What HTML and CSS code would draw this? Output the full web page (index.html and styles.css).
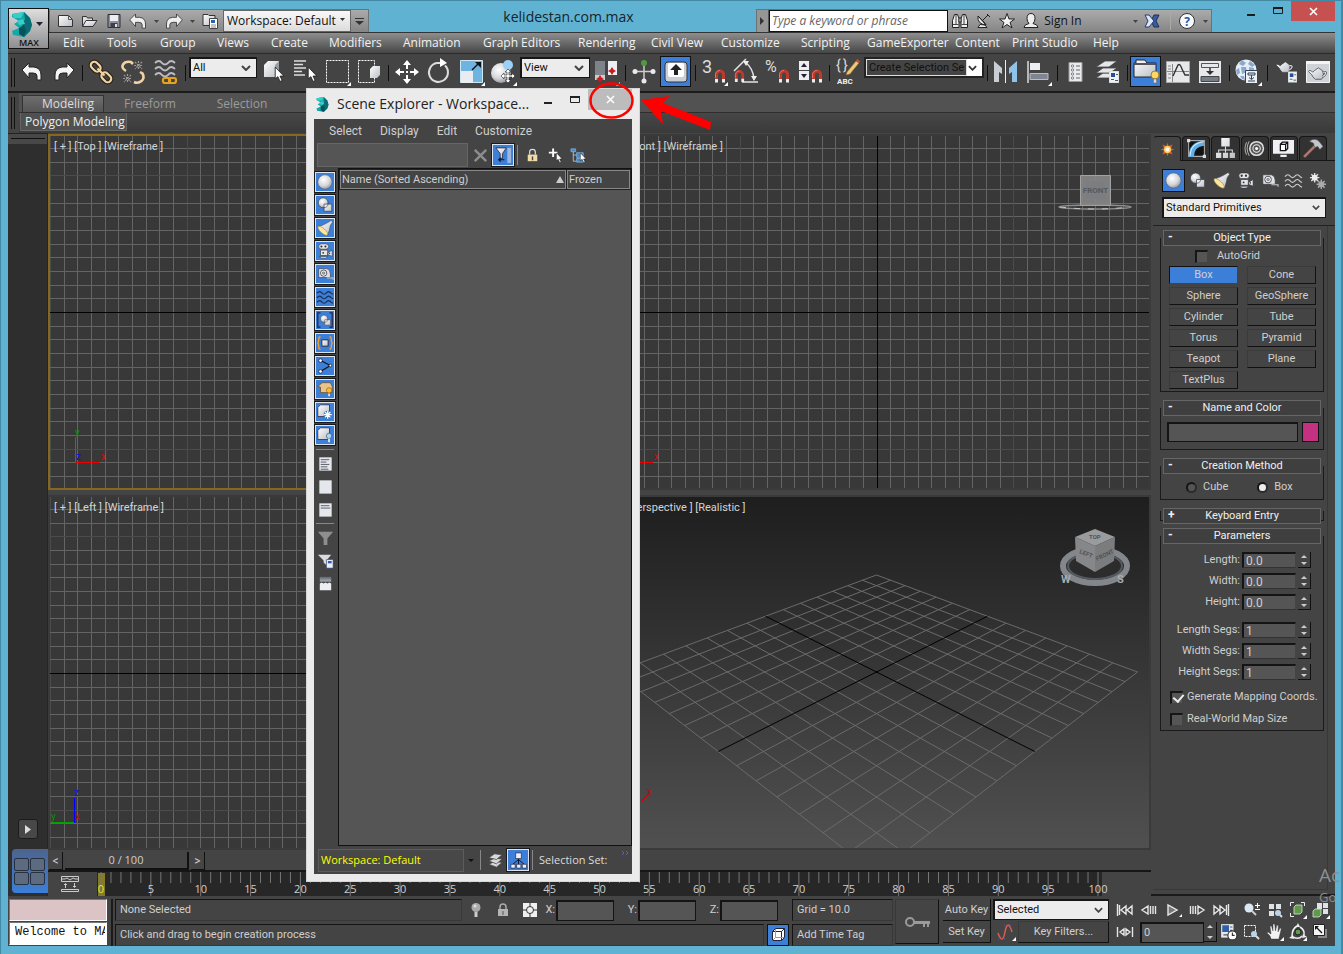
FILE: index.html
```html
<!DOCTYPE html>
<html lang="en">
<head>
<meta charset="utf-8">
<title>kelidestan.com.max</title>
<link rel="stylesheet" href="styles.css">
</head>
<body>
<svg class="defs" aria-hidden="true">
  <defs>
    <linearGradient id="gw" x1="0" y1="0" x2="1" y2="1"><stop offset="0" stop-color="#fff"/><stop offset="1" stop-color="#b9bdc4"/></linearGradient>
    <radialGradient id="gs" cx=".4" cy=".35" r=".7"><stop offset="0" stop-color="#fff"/><stop offset=".6" stop-color="#d4d6da"/><stop offset="1" stop-color="#8d9096"/></radialGradient>
    <linearGradient id="gd" x1="0" y1="0" x2="0" y2="1"><stop offset="0" stop-color="#60656d"/><stop offset="1" stop-color="#a9aeb6"/></linearGradient>
  </defs>
  <symbol id="logo" viewBox="0 0 20 25"><path fill="#15a8a8" d="M0 2 12 0l6 6 2 7-2 6-6 6-11-2-1-4 7-3-5-4 5-3-7-4z"/><path fill="#0b6b74" d="M12 0l6 6 2 7-2 6-6 6 1-6-3-6 3-6z"/><path fill="#36cfc8" d="M0 2 12 0 9 6 2 6zM5 9l6-2 2 5-6 1z"/><path fill="#08525c" d="M7 16l5-3 2 6-2 6-5-3z"/></symbol>
  <symbol id="undo" viewBox="0 0 20 18"><path d="M0 7 7 0v4h5q7 1 7 8v5h-4v-4q0-3-4-3H7v5z"/></symbol>
  <symbol id="redo" viewBox="0 0 20 18"><path d="M20 7 13 0v4H8q-7 1-7 8v5h4v-4q0-3 4-3h4v5z"/></symbol>
  <symbol id="sphere" viewBox="0 0 20 20"><circle cx="10" cy="10" r="8" fill="url(#gs)" stroke="#555a66" stroke-width=".6"/></symbol>
  <symbol id="shapes" viewBox="0 0 20 20"><circle cx="8" cy="7.500" r="5.500" fill="url(#gs)" stroke="#3a3f4a" stroke-width=".8"/><path fill="url(#gw)" stroke="#3a3f4a" stroke-width=".8" d="M9 9h8.500v8H9z"/><path fill="none" stroke="#555a66" stroke-width=".8" d="M13.500 8q0 5-5 5"/></symbol>
  <symbol id="light" viewBox="0 0 20 20"><path fill="url(#gw)" stroke="#3a3f4a" stroke-width=".6" d="M13 4l4-2.500 1.500 2L16 7q-1 6-3 11L2.500 8.500Q8 7 13 4z"/><ellipse cx="7.500" cy="13" rx="7" ry="2.600" transform="rotate(42 7.500 13)" fill="#ffe79a" stroke="#8a7a48" stroke-width=".6"/></symbol>
  <symbol id="camera" viewBox="0 0 20 20"><g fill="#e4e6ea" stroke="#33363d" stroke-width=".7"><rect x="3" y="2" width="11" height="6" rx="3"/><path d="M5 9h8v6H5zM13 12l5-3v7l-5-2zM4 16h9l-2 2H6z"/></g><g fill="#333"><circle cx="6" cy="5" r="1.200"/><circle cx="10.500" cy="5" r="1.200"/><circle cx="8" cy="12" r="1"/><circle cx="15" cy="12.500" r=".8"/></g></symbol>
  <symbol id="tape" viewBox="0 0 20 20"><path fill="#dfe1e6" stroke="#33363d" stroke-width=".7" d="M3 4h9q4 1 4 6v4H3z"/><circle cx="8.500" cy="9" r="3.500" fill="#fff" stroke="#444a55"/><circle cx="8.500" cy="9" r="1.500" fill="#aaa" stroke="#555" stroke-width=".6"/><path stroke="#c8c8c8" stroke-width="1.200" d="M12 14.500h7v2" fill="none"/></symbol>
  <symbol id="waves" viewBox="0 0 20 20"><path fill="none" stroke="currentColor" stroke-width="1.200" d="M1 6q3-4 6 0 2 2 4 0 3-4 6 0l2 1M1 11q3-4 6 0 2 2 4 0 3-4 6 0l2 1M1 16q3-4 6 0 2 2 4 0 3-4 6 0l2 1"/></symbol>
  <symbol id="cursor" viewBox="0 0 10 14"><path fill="#fff" stroke="#222" stroke-width=".8" d="M1 0v11l2.500-2L5.500 13.500l2-1-2-4H9z"/></symbol>
  <symbol id="magnet" viewBox="0 0 12 14"><path fill="none" stroke="#bd3a2c" stroke-width="3" d="M2.500 11V5.500a3.500 3.500 0 0 1 7 0V11"/><path fill="none" stroke="#f08070" stroke-width=".8" d="M1.500 9V5.500A4.200 4.200 0 0 1 6 1.500"/><path fill="#eee" d="M1 10h3v3.500H1zM8 10h3v3.500H8z"/></symbol>
  <symbol id="fly" viewBox="0 0 32 32"><path fill="#fff" d="M30 26v4h-4z"/></symbol>
  <symbol id="panelmini" viewBox="0 0 10 12"><path fill="#eef1f6" stroke="#9aa" stroke-width=".5" d="M0 0h10v12H0z"/><path fill="#244f96" d="M2 2h4v4H2z"/><path stroke="#555" d="M7 3.500h2M2 8.500h3M6 9.500h3"/></symbol>
  <symbol id="teapot" viewBox="0 0 22 16"><path fill="url(#gw)" stroke="#33363d" stroke-width=".8" d="M10 2q1-2 3 0l3 2q3 6-1 10H8Q5 12 4 9L0 5l1-1q3 0 4 2l2-2z"/><path fill="none" stroke="#33363d" stroke-width="2.600" d="M16 6q5-1 3.500 2-1 2-3.500 3"/><path fill="none" stroke="#dfe2e7" stroke-width="1.400" d="M16 6q5-1 3.500 2-1 2-3.500 3"/></symbol>
</svg>

<div class="window">
  <header class="header">
    <button class="appbtn" aria-label="Application menu"><svg width="20" height="25"><use href="#logo"/></svg><svg class="appdd" width="7" height="4" viewBox="0 0 7 4"><path fill="#223" d="M0 0h7L3.500 4z"/></svg><span>MAX</span></button>
    <div class="titlebar">
      <div class="qat">
        <button aria-label="New"><svg width="18" height="16" viewBox="0 0 18 16"><path fill="url(#gw)" stroke="#333" d="M1.500 2.500h10l4 4v7h-14z"/><path fill="none" stroke="#555" d="M11.500 2.500v4h4"/></svg></button>
        <button aria-label="Open"><svg width="18" height="16" viewBox="0 0 18 16"><path fill="#ddd" stroke="#333" d="M1.500 13.500v-10h4l1 1.500h5v3"/><path fill="url(#gw)" stroke="#333" d="M1.500 13.500 5 7.500h11l-4 6z"/></svg></button>
        <button aria-label="Save"><svg width="18" height="16" viewBox="0 0 18 16"><path fill="#8b9098" stroke="#2c2f38" d="M3 1.500h12v13H3z"/><path fill="#eceef2" d="M5 2h8v6H5z"/><path fill="#3c404a" d="M5.500 10h7v4.500h-7z"/><path fill="#ddd" d="M10 11h2v3h-2z"/></svg></button>
        <button aria-label="Undo"><svg class="tool-arrow" width="18" height="15"><use href="#undo"/></svg></button>
        <button class="narrow" aria-label="Undo list"><svg width="5" height="3" viewBox="0 0 5 3"><path fill="#444" d="M0 0h5L2.500 3z"/></svg></button>
        <button aria-label="Redo"><svg class="tool-arrow" width="18" height="15"><use href="#redo"/></svg></button>
        <button class="narrow" aria-label="Redo list"><svg width="5" height="3" viewBox="0 0 5 3"><path fill="#444" d="M0 0h5L2.500 3z"/></svg></button>
        <button aria-label="Project folder"><svg width="18" height="18" viewBox="0 0 18 18"><path fill="url(#gw)" stroke="#333" d="M2 13.500v-11h5l1 1h6v10z"/><path fill="#fff" stroke="#444" d="M8.500 6.500h8v10h-8z"/><path fill="#2863a8" d="M10 8h4v3h-4z"/><path stroke="#888" d="M10 13h5M10 15h5"/></svg></button>
        <span class="sel ws"><select aria-label="Workspace"><option>Workspace: Default</option></select><svg width="5" height="3" viewBox="0 0 5 3"><path fill="#333" d="M0 0h5L2.500 3z"/></svg></span>
        <button class="qmore" aria-label="Customize toolbar"><svg width="9" height="7" viewBox="0 0 9 7"><path fill="#333" d="M0 0h9v1H0zM0 3h9L4.500 7z"/></svg></button>
      </div>
      <h1>kelidestan.com.max</h1>
      <div class="info">
        <button class="infoarrow" aria-label="Collapse"><svg width="4" height="8" viewBox="0 0 4 8"><path fill="#333" d="M0 0l4 4-4 4z"/></svg></button>
        <input class="search" type="text" aria-label="Search" placeholder="Type a keyword or phrase">
        <button aria-label="Find"><svg width="18" height="18" viewBox="0 0 18 18"><g fill="#eee" stroke="#222"><path d="M3.500 2.500h3l1.500 4v9H1.500v-7zM14.500 2.500h-3l-1.500 4v9h6.500v-7z"/><path d="M8 6h2v4H8z"/></g><path stroke="#444" d="M2 12.500h5.500M10.500 12.500H16M5 3v9M13 3v9"/></svg></button>
        <button aria-label="Subscription"><svg width="18" height="18" viewBox="0 0 18 18"><path fill="#eee" stroke="#222" d="M3 4q-1 8 8 9l-2-3zM5 12.500l-2 3h9l-2-2.500zM3 4l8 9"/><path fill="none" stroke="#222" d="M8 8l5-5M12 2l3 3"/></svg></button>
        <button aria-label="Favorites"><svg width="18" height="18" viewBox="0 0 18 18"><path fill="#f2f2f2" stroke="#222" d="M9 1.500l2 5.500h5.500L12 10.500l2 5.500-5-3.500L4 16l2-5.500L1.500 7H7z"/></svg></button>
        <button class="signin"><svg width="18" height="18" viewBox="0 0 18 18"><path fill="#eee" stroke="#222" d="M9 1.500q4 0 4 5 0 3-2 5 5 1 5 4H2q0-3 5-4-2-2-2-5 0-5 4-5z"/></svg>Sign In<svg class="push" width="5" height="3" viewBox="0 0 5 3"><path fill="#444" d="M0 0h5L2.500 3z"/></svg></button>
        <button class="xchg" aria-label="Exchange"><svg width="18" height="16" viewBox="0 0 18 16"><path fill="#355da0" stroke="#1d3159" d="M16 2h-5L8 8l3 6h5l-3-6z"/><path fill="#dfe7f4" stroke="#223c72" d="M2 2h4l5 6-5 6H2l3-6z"/></svg></button>
        <i class="isep"></i>
        <button aria-label="Help"><svg width="18" height="18" viewBox="0 0 18 18"><circle cx="9" cy="9" r="7.500" fill="#f7f9fc" stroke="#333"/><text x="9" y="13.500" text-anchor="middle" font-size="12" font-weight="700" fill="#1e58a8">?</text></svg></button>
        <button class="narrow" aria-label="Help menu"><svg width="5" height="3" viewBox="0 0 5 3"><path fill="#444" d="M0 0h5L2.500 3z"/></svg></button>
      </div>
      <div class="winctl">
        <button aria-label="Minimize"><svg width="10" height="12" viewBox="0 0 10 12"><path fill="#1c1c1c" d="M1 9h8v2H1z"/></svg></button>
        <button aria-label="Maximize"><svg width="10" height="12" viewBox="0 0 10 12"><path fill="none" stroke="#1c1c1c" d="M.5 2.500h9v6h-9z"/><path fill="#1c1c1c" d="M0 2h10v2H0z"/></svg></button>
        <button class="close" aria-label="Close"><svg width="9" height="9" viewBox="0 0 9 9"><path stroke="#fff" stroke-width="1.600" d="M1 1l7 7M8 1 1 8"/></svg></button>
      </div>
    </div>
    <nav class="menubar" aria-label="Main menu">
      <button>Edit</button><button>Tools</button><button>Group</button><button>Views</button><button>Create</button><button>Modifiers</button><button>Animation</button><button>Graph Editors</button><button>Rendering</button><button>Civil View</button><button>Customize</button><button>Scripting</button><button>GameExporter</button><button>Content</button><button>Print Studio</button><button>Help</button>
    </nav>
  </header>

  <div class="client">
    <div class="toolbar" role="toolbar" aria-label="Main toolbar">
      <i class="grip"></i>
      <button aria-label="Undo"><svg class="arrow" width="20" height="18"><use href="#undo"/></svg></button>
      <button aria-label="Redo"><svg class="arrow" width="20" height="18"><use href="#redo"/></svg></button>
      <i class="sep five"></i>
      <button aria-label="Link"><svg viewBox="0 0 32 32"><g transform="rotate(45 16 16)" fill="none"><g stroke="#2b2418" stroke-width="4.500"><rect x="3" y="12.500" width="11" height="7" rx="3.500"/><rect x="18" y="12.500" width="11" height="7" rx="3.500"/><path d="M11 16h10"/></g><g stroke="#f0d2a4" stroke-width="2.200"><rect x="3" y="12.500" width="11" height="7" rx="3.500"/><rect x="18" y="12.500" width="11" height="7" rx="3.500"/><path d="M11 16h10"/></g></g></svg></button>
      <button aria-label="Unlink"><svg viewBox="0 0 32 32"><g fill="none" stroke="#f0d2a4" stroke-width="2.600"><path d="M9 15q-5-3-3-6.500T14 6l2 2M17 26q4 2 7.500-1t1-7.500L23 16"/></g><g stroke="#999" stroke-width="1.200" stroke-dasharray="2 1"><path d="M18 6l7 7M25 6l-7 7M21.500 5v9M17 9.500h9M7 19l7 7M14 19l-7 7M10.500 18v9M6 22.500h9"/></g></svg></button>
      <button aria-label="Bind to space warp"><svg viewBox="0 0 32 32"><path fill="none" stroke="#b9bcc2" stroke-width="1.800" d="M6 7q4-4 7 0 3 3 6 0 3-4 7 0M6 13q4-4 7 0 3 3 6 0 3-4 7 0M6 19q4-4 7 0 3 3 6 0 3-4 7 0"/><g fill="none" stroke="#e9a21c" stroke-width="2.200"><rect x="14" y="22" width="7" height="5" rx="2"/><rect x="20" y="22" width="7" height="5" rx="2"/></g></svg></button>
      <i class="sep eight"></i>
      <span class="sel light w68"><select aria-label="Selection filter"><option>All</option></select><svg width="10" height="6" viewBox="0 0 10 6"><path fill="none" stroke="#444" stroke-width="2" d="M1 1l4 4 4-4"/></svg></span>
      <button aria-label="Select object"><svg viewBox="0 0 32 32"><path fill="url(#gw)" d="M7 9l4-4h11v12l-4 4H7z"/><path fill="#7f848d" d="M18 9l4-4v12l-4 4z" opacity=".7"/><use href="#cursor" x="17" y="11" width="11" height="15"/></svg></button>
      <button aria-label="Select by name"><svg viewBox="0 0 32 32"><path stroke="#ddd" stroke-width="1.500" d="M5 5h12M5 8.500h9M5 12h12M5 15.500h8M5 19h11"/><use href="#cursor" x="18" y="11" width="11" height="15"/></svg></button>
      <button aria-label="Rectangular region"><svg viewBox="0 0 32 32"><path fill="none" stroke="#fff" stroke-dasharray="2 1" d="M5.500 4.500h22v22h-22z"/><use href="#fly" width="32" height="32"/></svg></button>
      <button aria-label="Window crossing"><svg viewBox="0 0 32 32"><path fill="none" stroke="#fff" stroke-dasharray="2 1" d="M5.500 4.500h16v22h-16z"/><path fill="url(#gw)" d="M17 13l3-3h7v9l-3 3h-7z"/></svg></button>
      <i class="sep"></i>
      <button aria-label="Move"><svg viewBox="0 0 32 32"><path fill="#fff" d="M16 4l4 5h-3v4h-2V9h-3zM16 28l4-5h-3v-4h-2v4h-3zM4 16l5-4v3h4v2H9v3zM28 16l-5-4v3h-4v2h4v3z"/><path fill="#fff" d="M15 15h2v2h-2z"/></svg></button>
      <button aria-label="Rotate"><svg viewBox="0 0 32 32"><path fill="none" stroke="#ddd" stroke-width="2" d="M22 9.500a9.500 9.500 0 1 1-8-2.500h3"/><path fill="#fff" d="M17 2l7 5-7 4z"/></svg></button>
      <button aria-label="Scale"><svg viewBox="0 0 32 32"><path fill="#6fb4e0" stroke="#cfe6f5" d="M5.500 4.500h22v22h-22z"/><path fill="#e9edf2" d="M6 15h12v12H6z"/><path stroke="#111" stroke-width="1.500" d="M17 14l7-7"/><path fill="#111" d="M20 6h6v6z"/><use href="#fly" width="32" height="32"/></svg></button>
      <button aria-label="Place"><svg viewBox="0 0 32 32"><circle cx="14" cy="17" r="10" fill="url(#gs)"/><circle cx="21" cy="9" r="5" fill="#9cd0f4"/><path fill="#fff" stroke="#222" stroke-width=".6" d="M21 13l3 3h-2v3h3v-2l3 3-3 3v-2h-3v3h2l-3 3-3-3h2v-3h-3v2l-3-3 3-3v2h3v-3h-2z"/><use href="#fly" width="32" height="32"/></svg></button>
      <span class="sel light w70"><select aria-label="Reference coordinate system"><option>View</option></select><svg width="10" height="6" viewBox="0 0 10 6"><path fill="none" stroke="#444" stroke-width="2" d="M1 1l4 4 4-4"/></svg></span>
      <button aria-label="Pivot center"><svg viewBox="0 0 32 32"><path fill="#7d828b" d="M5 5h10v19H5z"/><path fill="#c9ccd2" d="M5 19h10v5H5z"/><path fill="#eceef2" d="M18 5h9v14h-9z"/><path fill="#d01818" d="M10 19l1.500 2.500L14 23l-2.500 1.500L10 27l-1.500-2.500L6 23l2.500-1.500zM22 11l1.500 2.500L26 15l-2.500 1.500L22 19l-1.500-2.500L18 15l2.500-1.500z"/><use href="#fly" width="32" height="32"/></svg></button>
      <i class="sep"></i>
      <button aria-label="Manipulate"><svg viewBox="0 0 32 32"><path stroke="#ccc" stroke-width="1.500" d="M16 5v21M6 15.500h20"/><circle cx="16" cy="7" r="3" fill="#4f9a3c"/><g fill="#e8eaee"><circle cx="16" cy="25" r="2.500"/><circle cx="7" cy="15.500" r="2.500"/><circle cx="25" cy="15.500" r="2.500"/></g></svg></button>
      <button class="on" aria-pressed="true" aria-label="Keyboard override"><svg viewBox="0 0 32 32"><rect x="5" y="6" width="22" height="20" rx="3" fill="#c9ced6" stroke="#333"/><rect x="8" y="7" width="16" height="14" rx="2" fill="#fff"/><path fill="#222" d="M16 8l6 6h-4v5h-4v-5h-4z"/></svg></button>
      <i class="sep"></i>
      <button aria-label="Snaps toggle"><svg viewBox="0 0 32 32"><text x="4" y="17" font-size="18" fill="#ddd">3</text><use href="#magnet" x="16" y="13" width="12" height="14"/><use href="#fly" width="32" height="32"/></svg></button>
      <button aria-label="Angle snap"><svg viewBox="0 0 32 32"><path fill="none" stroke="#e4e4e4" stroke-width="1.500" d="M4 15 16 3M12 26h16M15 6q8 6 9 17"/><path fill="#eee" d="M13 5l6 0-3 5zM21 20h6l-3 5z"/><use href="#magnet" x="4" y="13" width="11" height="14"/></svg></button>
      <button aria-label="Percent snap"><svg viewBox="0 0 32 32"><text x="3" y="16" font-size="16" fill="#ddd">%</text><use href="#magnet" x="16" y="13" width="12" height="14"/></svg></button>
      <button aria-label="Spinner snap"><svg viewBox="0 0 32 32"><path fill="#eceef2" d="M5 5h10v9H5zM5 15h10v9H5z"/><path fill="#223" d="M10 7l3 4H7zM10 22l3-4H7z"/><use href="#magnet" x="17" y="13" width="12" height="14"/></svg></button>
      <i class="sep"></i>
      <button aria-label="Edit named selections"><svg viewBox="0 0 32 32"><text x="4" y="14" font-size="14" fill="#ddd">{</text><text x="11" y="14" font-size="14" fill="#ddd">}</text><text x="5" y="28" font-size="8" font-weight="700" fill="#eee">ABC</text><path fill="#f0c878" stroke="#8a6a2a" stroke-width=".6" d="M15 16l9-11 3 2-9 11-4 1z"/><path fill="#c05040" d="M24 5l3 2 1-2-3-2z"/></svg></button>
      <span class="sel named"><select aria-label="Named selection sets"><option>Create Selection Se</option></select><svg width="9" height="6" viewBox="0 0 10 6"><path fill="none" stroke="#333" stroke-width="2" d="M1 1l4 4 4-4"/></svg></span>
      <i class="sep"></i>
      <button aria-label="Mirror"><svg viewBox="0 0 32 32"><path fill="#c9cdd4" d="M4 5l8 7v6l-3-2v10H4z"/><path stroke="#eee" d="M15.500 4v23"/><path fill="#8fc4e8" d="M27 5l-8 7v6l3-2v10h5z"/></svg></button>
      <button aria-label="Align"><svg viewBox="0 0 32 32"><path stroke="#ddd" stroke-width="1.500" d="M6 5v22"/><path fill="#eceef2" d="M8 7h10v7H8z"/><path fill="#7f8691" stroke="#b9bdc6" d="M8 17.500h18v6H8z"/><use href="#fly" width="32" height="32"/></svg></button>
      <i class="sep"></i>
      <button aria-label="Layer explorer"><svg viewBox="0 0 32 32"><path fill="#e9ebef" stroke="#999" d="M9 6.500h13v19H9z"/><g fill="none" stroke="#666"><path d="M16 10h4M16 14h4M16 18h4M16 22h4"/><g stroke-width=".8"><circle cx="12.500" cy="10" r="1.200"/><circle cx="12.500" cy="14" r="1.200"/><circle cx="12.500" cy="18" r="1.200"/><circle cx="12.500" cy="22" r="1.200"/></g></g></svg></button>
      <button aria-label="Layers"><svg viewBox="0 0 32 32"><g fill="#e4e6ea" stroke="#444" stroke-width=".8"><path d="M4 22l7-5h14l-7 5z"/><path d="M4 17l7-5h14l-7 5z"/><path d="M4 11l9-6h12l-8 6z"/></g><use href="#panelmini" x="17" y="15" width="10" height="12"/></svg></button>
      <i class="sep"></i>
      <button class="on" aria-pressed="true" aria-label="Toggle ribbon"><svg viewBox="0 0 32 32"><path fill="url(#gw)" stroke="#223" d="M4 7h2V4h9l2 3h9v14H4z"/><path fill="#555" d="M4 7h22v2H4z"/><circle cx="25" cy="19" r="4" fill="#ffd668" stroke="#8a6a20" stroke-width=".8"/><path fill="#ddd" stroke="#666" stroke-width=".5" d="M23.500 23h3v4h-3z"/></svg></button>
      <button aria-label="Curve editor"><svg viewBox="0 0 32 32"><path fill="#e6e8ec" stroke="#aaa" d="M4.500 5.500h23v21h-23z"/><path stroke="#888" d="M5 15.500h22M10.500 8v18M6 10h3M6 13h3M6 18h3M6 22h3"/><path fill="none" stroke="#333" stroke-width="1.400" d="M11 20l5-11q2-2 4 4l3 6h4"/></svg></button>
      <button aria-label="Schematic view"><svg viewBox="0 0 32 32"><path fill="#e6e8ec" d="M5 5h22v22H5z"/><path fill="none" stroke="#555" d="M7.500 7.500h17v4h-17z"/><path fill="#777d88" stroke="#444" d="M7 20.500h18v5H7z"/><path stroke="#333" stroke-width="1.500" d="M16 12v5"/><path fill="#333" d="M12 15h8l-4 4z"/></svg></button>
      <i class="sep"></i>
      <button aria-label="Material editor"><svg viewBox="0 0 32 32"><circle cx="14" cy="14" r="10.500" fill="#e6edf5"/><path fill="#8aa9cc" d="M10 4l4 3-3 3-4-2zM18 5l5 4-3 2-4-3zM9 11l5 0 1 5-5 2zM4 14l3-2 1 5-3 2zM17 11l5 1 0 5-5 0zM8 20l4 0 1 4-3-1z"/><path fill="#eef1f6" stroke="#345" d="M13.500 14.500h12v13h-12z"/><path fill="none" stroke="#345" d="M16 17h7v2h-7zM19.500 19v4M17 21.500l2.500 2 2.500-2M16 25h7"/><use href="#fly" width="32" height="32"/></svg></button>
      <i class="sep"></i>
      <button aria-label="Render setup"><svg viewBox="0 0 32 32"><use href="#teapot" x="5" y="5" width="20" height="13"/><use href="#panelmini" x="18" y="15" width="9" height="12"/></svg></button>
      <button aria-label="Rendered frame"><svg viewBox="0 0 32 32"><path fill="#cfd2d7" stroke="#f4f4f4" d="M4.500 5.500h23v21h-23z"/><path fill="#f4f4f4" d="M4 5h24v3H4z"/><use href="#teapot" x="6" y="11" width="20" height="14"/></svg></button>
    </div>

    <div class="ribbon">
      <i class="grip tall"></i>
      <div class="rtabs" role="tablist"><button class="cur" role="tab">Modeling</button><button role="tab">Freeform</button><button role="tab">Selection</button></div>
      <div class="rpanel"><button>Polygon Modeling</button></div>
    </div>

    <div class="main">
      <aside class="strip">
        <div class="striptop"></div>
        <button class="play" aria-label="Expand"><svg width="6" height="9" viewBox="0 0 6 9"><path fill="#ddd" d="M0 0l6 4.500L0 9z"/></svg></button>
        <button class="layout" aria-label="Viewport layout"><i></i><i></i><i></i><i></i></button>
      </aside>
      <section class="center">
        <div class="viewports">
          <div class="vp active"><svg class="grid"></svg><span>[ + ] [Top ] [Wireframe ]</span>
            <svg class="tripod" width="40" height="40" viewBox="0 0 40 40"><path stroke="#00a000" d="M6.500 9v25"/><path stroke="#e00" d="M7 33.500h24"/><text x="6" y="7" fill="#0a900a">y</text><text x="32" y="31" fill="#d01010">x</text><text x="7" y="31" fill="#1010e0">z</text></svg></div>
          <div class="vp"><svg class="grid"></svg><span>[ + ] [Front ] [Wireframe ]</span>
            <svg class="tripod" width="40" height="40" viewBox="0 0 40 40"><path stroke="#00a000" d="M6.500 9v25"/><path stroke="#e00" d="M7 33.500h24"/><text x="32" y="31" fill="#d01010">x</text></svg>
            <svg class="cube front" width="80" height="40" viewBox="0 0 80 40"><ellipse cx="40" cy="34" rx="36" ry="2" fill="none" stroke="#8c8f93" stroke-width="1.500"/><path fill="#858585" stroke="#a2a2a2" d="M25.500 2.500h30v30h-30z" fill-opacity=".92"/><path fill="#7b7d80" d="M31 8h19v18H31z"/><text x="40.500" y="20" text-anchor="middle" font-size="8" font-weight="700" fill="#55595e">FRONT</text><path fill="none" stroke="#c6c6c6" stroke-dasharray="6 8" d="M5 34q35 4 70 0"/></svg></div>
          <div class="vp"><svg class="grid"></svg><span>[ + ] [Left ] [Wireframe ]</span>
            <svg class="tripod low" width="40" height="40" viewBox="0 0 40 40"><path stroke="#0000ff" d="M24.500 9v25"/><path stroke="#00a000" d="M1 33.500h23"/><text x="24" y="7" fill="#1010e0">z</text><text x="1" y="31" fill="#0a900a">y</text><text x="25" y="31" fill="#b01010">x</text></svg></div>
          <div class="vp persp"><svg class="plane"></svg><span>[ + ] [Perspective ] [Realistic ]</span>
            <svg class="tripod" width="56" height="50" viewBox="0 0 56 50"><path stroke="#d00" d="M36 24l10-9"/><text x="44" y="16" fill="#b01010">x</text></svg>
            <svg class="cube home" width="76" height="64" viewBox="0 0 76 64"><ellipse cx="38" cy="41" rx="32" ry="17" fill="#2c2c2c" stroke="#83878c" stroke-width="6"/><ellipse cx="38" cy="41" rx="27" ry="13" fill="none" stroke="#555a60" stroke-width="2"/><g fill="#a9abad" font-size="11" font-weight="700"><text x="4" y="58">W</text><text x="60" y="58">S</text></g><path fill="#9a9b9c" d="M38 4l20 8-20 9-20-9z"/><path fill="#868788" d="M18 12l20 9v26L19 36z"/><path fill="#7b7c7e" d="M58 12l-20 9v26l19-11z"/><g fill="#505458" font-size="6" font-weight="700"><text x="32" y="14">TOP</text><text x="22" y="28" transform="rotate(22 22 28)">LEFT</text><text x="40" y="36" transform="rotate(-26 40 36)">FRONT</text></g></svg></div>
        </div>
        <div class="slider"><button aria-label="Previous frame">&lt;</button><button class="handle">0 / 100</button><button aria-label="Next frame">&gt;</button></div>
        <div class="track">
          <button aria-label="Mini curve editor"><svg width="18" height="18" viewBox="0 0 18 18"><g fill="none" stroke="#ccc"><path d="M.5 1.500h17v5H.5zM1 4h3l2-1 3 2 3-2 2 1h3M.5 14.500h17v2H.5z"/><path d="M4.500 13V9M3 10l1.500-1.500L6 10M13.500 8v4M12 11l1.500 1.500L15 11"/></g></svg></button>
          <div class="ruler"><svg class="ticks"></svg></div>
        </div>
      </section>
      <aside class="cmd">
        <div class="ctabs" role="tablist">
          <button class="cur" role="tab" aria-label="Create"><svg viewBox="0 0 20 20"><path fill="#e2601c" d="M10 2l1.500 4L16 4l-2 4.500 4 1.500-4 1.500 2 4.500-4.500-2L10 18l-1.500-4L4 16l2-4.500L2 10l4-1.500L4 4l4.500 2z"/><circle cx="10" cy="10" r="4" fill="#ffd76a"/><circle cx="10" cy="10" r="2" fill="#fff"/></svg></button>
          <button role="tab" aria-label="Modify"><svg viewBox="0 0 20 20"><path fill="#111" stroke="#aaa" d="M2.500 2.500h15v15h-15z"/><path fill="none" stroke="#5fb0e8" stroke-width="5" d="M5 18Q5 6 17 5"/><path fill="none" stroke="#cfe8fa" d="M4 17Q4 5 17 3.500"/><path fill="#ddd" d="M1 1h3v3H1zM16 16h3v3h-3z"/></svg></button>
          <button role="tab" aria-label="Hierarchy"><svg viewBox="0 0 20 20"><path fill="url(#gw)" d="M6 0h8v8H6zM1 14h5v5H1zM7.500 14h5v5h-5zM14 14h5v5h-5z"/><path fill="none" stroke="#ddd" d="M10 8v6M3.500 14v-2.500h13V14"/></svg></button>
          <button role="tab" aria-label="Motion"><svg viewBox="0 0 20 20"><circle cx="12" cy="10" r="6.500" fill="#555" stroke="#ddd" stroke-width="1.500"/><circle cx="12" cy="10" r="3.500" fill="none" stroke="#eee"/><circle cx="12" cy="10" r="1.500" fill="#fff"/><path fill="none" stroke="#aaa" d="M5 3q-4 7 0 14M2.500 4q-3 6 0 12"/></svg></button>
          <button role="tab" aria-label="Display"><svg viewBox="0 0 20 20"><path fill="#eef0f3" d="M0 2h20v13H0zM7 16h6v2H7z"/><path fill="#fff" stroke="#111" stroke-width="1.200" d="M7 6l2-2h5v6l-2 2H7zM7 6h5v6M12 6l2-2"/></svg></button>
          <button role="tab" aria-label="Utilities"><svg viewBox="0 0 20 20"><path stroke="#b5766a" stroke-width="2.600" d="M2 18 13 7"/><path fill="#c3c6cc" stroke="#555" stroke-width=".6" d="M7 3q6-4 10 1l3 4-3 3-2-3-3 1-1-4z"/></svg></button>
        </div>
        <div class="cats">
          <button class="on" aria-pressed="true" aria-label="Geometry"><svg viewBox="0 0 20 20"><use href="#sphere"/></svg></button>
          <button aria-label="Shapes"><svg viewBox="0 0 20 20"><use href="#shapes"/></svg></button>
          <button aria-label="Lights"><svg viewBox="0 0 20 20"><use href="#light"/></svg></button>
          <button aria-label="Cameras"><svg viewBox="0 0 20 20"><use href="#camera"/></svg></button>
          <button aria-label="Helpers"><svg viewBox="0 0 20 20"><use href="#tape"/></svg></button>
          <button aria-label="Space warps"><svg viewBox="0 0 20 20"><use href="#waves"/></svg></button>
          <button aria-label="Systems"><svg viewBox="0 0 20 20"><g stroke="#ddd" stroke-width="1.500"><path d="M2 7h10M7 2v10M3.500 3.500l7 7M10.500 3.500l-7 7"/><path stroke="#aaa" d="M9 14h10M14 9v10M10.500 10.500l7 7M17.500 10.500l-7 7"/></g><circle cx="7" cy="7" r="3" fill="#eee"/><circle cx="14" cy="14" r="3" fill="#aaa"/></svg></button>
        </div>
        <div class="kind"><span class="sel light full"><select aria-label="Primitive category"><option>Standard Primitives</option></select><svg width="8" height="5" viewBox="0 0 10 6"><path fill="none" stroke="#444" stroke-width="2" d="M1 1l4 4 4-4"/></svg></span></div>
        <div class="rolls">
          <section class="roll r1"><h2><i>-</i>Object Type</h2>
            <label class="autogrid"><input type="checkbox">AutoGrid</label>
            <div class="prims"><button class="on">Box</button><button>Cone</button><button>Sphere</button><button>GeoSphere</button><button>Cylinder</button><button>Tube</button><button>Torus</button><button>Pyramid</button><button>Teapot</button><button>Plane</button><button>TextPlus</button></div>
          </section>
          <section class="roll"><h2><i>-</i>Name and Color</h2>
            <div class="namecolor"><input type="text" aria-label="Object name"><button aria-label="Object color"></button></div>
          </section>
          <section class="roll r3"><h2><i>-</i>Creation Method</h2>
            <div class="radios"><label><input type="radio" name="method">Cube</label><label><input type="radio" name="method" checked>Box</label></div>
          </section>
          <section class="roll tight"><h2><i>+</i>Keyboard Entry</h2></section>
          <section class="roll"><h2><i>-</i>Parameters</h2>
            <div class="params">
              <label for="p1">Length:</label><input id="p1" type="text" value="0.0"><button class="spin" aria-label="Step length"></button>
              <label for="p2">Width:</label><input id="p2" type="text" value="0.0"><button class="spin" aria-label="Step width"></button>
              <label for="p3">Height:</label><input id="p3" type="text" value="0.0"><button class="spin" aria-label="Step height"></button>
            </div>
            <div class="params segs">
              <label for="p4">Length Segs:</label><input id="p4" type="text" value="1"><button class="spin" aria-label="Step length segments"></button>
              <label for="p5">Width Segs:</label><input id="p5" type="text" value="1"><button class="spin" aria-label="Step width segments"></button>
              <label for="p6">Height Segs:</label><input id="p6" type="text" value="1"><button class="spin" aria-label="Step height segments"></button>
            </div>
            <div class="checks"><label><input type="checkbox" checked>Generate Mapping Coords.</label><label><input type="checkbox">Real-World Map Size</label></div>
          </section>
        </div>
      </aside>
    </div>

    <footer class="status">
      <div class="listener"><div class="pink"></div><input class="script" type="text" aria-label="Script listener" value="Welcome to MAXScript."></div>
      <div class="lines">
        <div class="line">
          <div class="cell grow">None Selected</div>
          <div class="sicons">
            <button aria-label="Hint"><svg width="18" height="18" viewBox="0 0 18 18"><circle cx="9" cy="6.500" r="4.500" fill="#aaa"/><circle cx="8" cy="5" r="1.500" fill="#ddd"/><path fill="#ccc" d="M7.500 11h3v5h-3z"/></svg></button>
            <button aria-label="Selection lock"><svg width="18" height="18" viewBox="0 0 18 18"><path fill="none" stroke="#aaa" stroke-width="1.500" d="M6 9V6a3 3 0 0 1 6 0v3"/><path fill="#b4b4b4" d="M4 8h10v7H4z"/><path stroke="#555" d="M9 10v4"/></svg></button>
            <button aria-label="Absolute mode"><svg width="18" height="18" viewBox="0 0 18 18"><path fill="#f0f0f0" d="M2 2h14v14H2z"/><path fill="none" stroke="#333" d="M2 9h14M9 2v14"/><circle cx="9" cy="9" r="3.500" fill="#f0f0f0" stroke="#333"/></svg></button>
          </div>
          <label class="coord">X:<input type="text"></label><label class="coord">Y:<input type="text"></label><label class="coord">Z:<input type="text"></label>
          <div class="cell fix">Grid = 10.0</div>
        </div>
        <div class="line">
          <div class="cell grow">Click and drag to begin creation process</div>
          <button class="iso" aria-label="Isolate"><svg width="18" height="18" viewBox="0 0 18 18"><path fill="#fff" stroke="#223" d="M3.500 5.500l3-3h9v9l-3 3h-9zM3.500 5.500h9v9M12.500 5.500l3-3"/><path fill="none" stroke="#99a" d="M6.500 3v8.500H15M6.500 11.500l-3 3"/></svg></button>
          <button class="cell fix">Add Time Tag</button>
        </div>
      </div>
      <button class="keybig" aria-label="Set keys"><svg width="25" height="12" viewBox="0 0 25 12"><circle cx="5" cy="6" r="4" fill="none" stroke="#9a9a9a" stroke-width="2"/><path fill="#9a9a9a" d="M9 5h16v3h-1v3h-2V8h-2v3h-2V8H9z"/></svg></button>
      <div class="keys"><button>Auto Key</button><button>Set Key</button></div>
      <div class="filters">
        <span class="sel light full"><select aria-label="Key selection"><option>Selected</option></select><svg width="9" height="6" viewBox="0 0 10 6"><path fill="none" stroke="#444" stroke-width="2" d="M1 1l4 4 4-4"/></svg></span>
        <div class="frow"><button class="tangent" aria-label="Tangents"><svg width="22" height="20" viewBox="0 0 22 20"><path fill="none" stroke="#d8604c" stroke-width="1.500" d="M3 11q2 6 4 6 2-1 3-7t3-7q2 0 4 7"/><path stroke="#55c" stroke-dasharray="1 2" d="M3 17h9M9 3h9"/><path fill="#fff" d="M21 15v4h-4z"/></svg></button><button class="kf">Key Filters...</button></div>
      </div>
      <div class="playback">
        <div class="prow">
          <button aria-label="Go to start"><svg viewBox="0 0 18 14"><path fill="none" stroke="#e6e6e6" stroke-width="1.400" d="M1.500 1v12M3.500 2v10M10 3v8L5 7zM16 3v8l-5-4z"/></svg></button>
          <button aria-label="Previous"><svg viewBox="0 0 18 14"><path fill="none" stroke="#e6e6e6" stroke-width="1.400" d="M8 3v8L2 7zM10.500 3v8M13 3v8M15.500 3v8"/></svg></button>
          <button aria-label="Play"><svg viewBox="0 0 18 14"><path fill="#777" stroke="#e6e6e6" stroke-width="1.400" d="M4 2v10l9-5z"/><path fill="#fff" d="M18 11v3h-3z"/></svg></button>
          <button aria-label="Next"><svg viewBox="0 0 18 14"><path fill="none" stroke="#e6e6e6" stroke-width="1.400" d="M10 3v8l6-4zM7.500 3v8M5 3v8M2.500 3v8"/></svg></button>
          <button aria-label="Go to end"><svg viewBox="0 0 18 14"><path fill="none" stroke="#e6e6e6" stroke-width="1.400" d="M16.500 1v12M14.500 2v10M8 3v8l5-4zM2 3v8l5-4z"/></svg></button>
        </div>
        <div class="prow two">
          <button aria-label="Key mode"><svg viewBox="0 0 18 14"><path fill="none" stroke="#e6e6e6" stroke-width="1.400" d="M1.500 2v10M16.500 2v10M8 4v6L4 7zM10 4v6l4-3z"/></svg></button>
          <input type="text" aria-label="Current frame" value="0"><button class="spin" aria-label="Step frame"></button>
          <button aria-label="Time configuration"><svg viewBox="0 0 16 16"><path fill="#e6e8ec" d="M1 1h11v12H1z"/><path fill="#2e5fa8" d="M2 2h6v6H2z"/><path stroke="#555" d="M9 3.500h2M9 6.500h2M3 10.500h4"/><circle cx="11" cy="11" r="4" fill="#fff" stroke="#333"/><path fill="none" stroke="#333" d="M11 8.500V11h2"/></svg></button>
        </div>
      </div>
      <div class="nav">
        <button aria-label="Zoom"><svg viewBox="0 0 18 18"><circle cx="6" cy="7" r="4.500" fill="#dce8f4"/><path stroke="#ccc" stroke-width="2" d="M9 10l4 4"/><path stroke="#fff" d="M12 4.500h5M14.500 2v5M12 8.500h5"/></svg></button>
        <button aria-label="Zoom all"><svg viewBox="0 0 18 18"><path fill="#dfe3e8" d="M3 3h5v5H3zM10 3h5v5h-5zM3 10h5v5H3z"/><circle cx="12" cy="12" r="3" fill="#bcd2e6"/><path stroke="#ddd" stroke-width="2" d="M14 14l2 2"/></svg></button>
        <button aria-label="Zoom extents"><svg viewBox="0 0 18 18"><path fill="none" stroke="#eee" d="M1.500 5V1.500H5M12 1.500h3.500V5M1.500 12v3.500H5"/><path fill="#5f9a4c" stroke="#d6e8d0" stroke-width=".8" d="M5 6l2-2h6v7l-2 2H5z"/><path fill="#fff" d="M18 14v4h-4z"/></svg></button>
        <button aria-label="Zoom extents all"><svg viewBox="0 0 18 18"><path fill="#dfe3e8" d="M5 2h5v6H5zM11 2h5v5h-5zM11 8h5v5h-5z"/><path fill="#5f9a4c" stroke="#d6e8d0" stroke-width=".8" d="M1 10l2-2h6v6l-2 2H1z"/><path fill="#fff" d="M18 14v4h-4z"/></svg></button>
        <button aria-label="Region zoom"><svg viewBox="0 0 18 18"><path fill="none" stroke="#fff" stroke-dasharray="2 1" d="M1.500 2.500h11v11h-11z"/><circle cx="11" cy="11" r="3" fill="#bcd2e6"/><path stroke="#ddd" stroke-width="2" d="M13 13l3 3"/></svg></button>
        <button aria-label="Pan"><svg viewBox="0 0 18 18"><path fill="#f2f2f2" stroke="#333" stroke-width=".4" d="M5 16q0-3-4-6l1-1 3 2-1-8 1.500 0L7 8 7 1h1.700L9.500 8l1.300-6 1.500.5L12 9l2-4 1.300.7L13 15v1z"/><path fill="#fff" d="M18 14v4h-4z"/></svg></button>
        <button aria-label="Orbit"><svg viewBox="0 0 18 18"><path fill="none" stroke="#eee" stroke-width="1.500" d="M8 3q-5 3-5 10M4 14q6 3 9-1M15 12q1-5-4-8"/><circle cx="9" cy="9" r="3" fill="#5f9a4c" stroke="#222"/><path fill="#eee" d="M9 0l2 4H7zM0 15l4-3 1 4zM18 14l-4-3-1 4z"/><path fill="#fff" d="M18 14v4h-4z"/></svg></button>
        <button aria-label="Maximize viewport"><svg viewBox="0 0 18 18"><path fill="#888" d="M6 6h9v9H6z"/><path fill="#f4f4f4" stroke="#222" d="M1.500 1.500h11v11h-11z"/><path stroke="#111" stroke-width="1.300" d="M4 4l6 6"/><path fill="#111" d="M3 3h4L3 7z"/></svg></button>
      </div>
    </footer>
  </div>
</div>

<div class="explorer" role="dialog" aria-label="Scene Explorer">
  <div class="etitle"><svg width="15" height="15"><use href="#logo"/></svg><h2>Scene Explorer - Workspace...</h2>
    <button aria-label="Minimize"><svg width="10" height="12" viewBox="0 0 10 12"><path fill="#222" d="M1 8h8v2H1z"/></svg></button><button aria-label="Maximize"><svg width="10" height="12" viewBox="0 0 10 12"><path fill="none" stroke="#222" d="M.5 2.500h9v6h-9z"/><path fill="#222" d="M0 2h10v2H0z"/></svg></button><button class="x" aria-label="Close"><svg width="9" height="9" viewBox="0 0 9 9"><path stroke="#fff" stroke-width="1.500" d="M1 1l7 7M8 1 1 8"/></svg></button></div>
  <div class="ebody">
    <nav class="emenu" aria-label="Explorer menu"><button>Select</button><button>Display</button><button>Edit</button><button>Customize</button></nav>
    <div class="efind"><input type="text" aria-label="Find">
      <button aria-label="Clear"><svg viewBox="0 0 20 20"><path stroke="#8d8d8d" stroke-width="2.600" d="M4 4l12 12M16 4 4 16"/></svg></button>
      <button class="on" aria-label="Filter"><svg viewBox="0 0 20 20"><path fill="#9db7dc" d="M14 2h4v16h-4z"/><path fill="url(#gw)" stroke="#223" stroke-width=".8" d="M2 2h11L9 8v5H6.500V8z"/><path fill="none" stroke="#111" stroke-width="1.200" d="M5 14.500h6M7 12.500l-2 2 2 2"/></svg></button>
      <i class="vsep"></i>
      <button aria-label="Lock"><svg viewBox="0 0 20 20"><path fill="none" stroke="#ddd" stroke-width="1.300" d="M7 9V6.500a3 3 0 0 1 6 0V9"/><path fill="#f1dca8" d="M5 9h10v7H5z"/><path stroke="#444" stroke-width="1.500" d="M10 11v4"/></svg></button>
      <button aria-label="Add"><svg viewBox="0 0 20 20"><path stroke="#fff" stroke-width="2" d="M3 7h9M7.500 2.500v9"/><use href="#cursor" x="10" y="7" width="8" height="11"/></svg></button>
      <button aria-label="Hierarchy select"><svg viewBox="0 0 20 20"><path fill="none" stroke="#bbb" d="M4.500 5v11H8M4.500 9.500H8"/><path fill="#3f8ad0" stroke="#9cc8ee" stroke-width=".6" d="M2 3h5v3H2zM8 7h7v5H8zM8 13h7v4H8z"/><use href="#cursor" x="11" y="7" width="8" height="11"/></svg></button>
    </div>
    <div class="emid">
      <div class="ecol">
        <button class="on" aria-label="Geometry"><svg viewBox="0 0 20 20"><use href="#sphere"/></svg></button>
        <button class="on" aria-label="Shapes"><svg viewBox="0 0 20 20"><use href="#shapes"/></svg></button>
        <button class="on" aria-label="Lights"><svg viewBox="0 0 20 20"><use href="#light"/></svg></button>
        <button class="on" aria-label="Cameras"><svg viewBox="0 0 20 20"><use href="#camera"/></svg></button>
        <button class="on" aria-label="Helpers"><svg viewBox="0 0 20 20"><use href="#tape"/></svg></button>
        <button class="on dark" aria-label="Space warps"><svg viewBox="0 0 20 20"><use href="#waves"/></svg></button>
        <button class="on" aria-label="Groups"><svg viewBox="0 0 20 20"><path fill="none" stroke="#224" stroke-width="1.300" d="M5 2H2v16h3M15 2h3v16h-3"/><use href="#shapes" x="3" y="3" width="15" height="15"/></svg></button>
        <button class="on" aria-label="XRefs"><svg viewBox="0 0 20 20"><path fill="none" stroke="#f0a030" stroke-width="1.500" d="M5 3q-2 0-2 3t-1 4q1 1 1 4t2 3M15 3q2 0 2 3t1 4q-1 1-1 4t-2 3"/><path fill="url(#gw)" stroke="#223" d="M6.500 6.500h7v7h-7z"/></svg></button>
        <button class="on" aria-label="Bones"><svg viewBox="0 0 20 20"><path fill="none" stroke="#112" stroke-width="1.300" d="M5 4l11 5.500L5 16"/><g fill="#fff" stroke="#112" stroke-width=".8"><circle cx="5" cy="4" r="2"/><circle cx="16" cy="9.500" r="1.500"/><circle cx="5" cy="16" r="2"/></g></svg></button>
        <button class="on" aria-label="Containers"><svg viewBox="0 0 20 20"><path fill="#e8c38c" stroke="#6a4a20" stroke-width=".8" d="M2 7l5-4h9l2 4v7H5V8z"/><circle cx="14.500" cy="11.500" r="3" fill="#ffb830" stroke="#7a5010" stroke-width=".6"/><path fill="#ddd" d="M13.500 15h2v3h-2z"/></svg></button>
        <button class="on" aria-label="Frozen"><svg viewBox="0 0 20 20"><path fill="url(#gw)" stroke="#223" stroke-width=".8" d="M2 5l3-3h10v11l-3 2H2z"/><circle cx="13" cy="13" r="4.500" fill="#2f78c8"/><path stroke="#fff" stroke-width="1.400" d="M8.500 13h9M13 8.500v9M10 10l6 6M16 10l-6 6"/></svg></button>
        <button class="on" aria-label="Hidden"><svg viewBox="0 0 20 20"><path fill="url(#gw)" stroke="#223" stroke-width=".8" d="M2 5l3-3h10v13H2z"/><circle cx="14.500" cy="11" r="3" fill="#a6d6f8" stroke="#245" stroke-width=".6"/><path fill="#e8e8e8" d="M13.500 14h2v4h-2z"/></svg></button>
        <i class="hsep"></i>
        <button aria-label="All"><svg viewBox="0 0 20 20"><path fill="#e4e7ec" d="M3.500 3.500h13v14h-13z"/><path stroke="#555b66" d="M5 6h9M5 8.500h6M5 11h9M5 13.500h7M5 16h8"/></svg></button>
        <button aria-label="None"><svg viewBox="0 0 20 20"><path fill="#e4e7ec" d="M3.500 3.500h13v14h-13z"/></svg></button>
        <button aria-label="Invert"><svg viewBox="0 0 20 20"><path fill="#e4e7ec" d="M3.500 3.500h13v14h-13z"/><path stroke="#555b66" d="M5 6h9M5 8.500h10"/></svg></button>
        <i class="hsep"></i>
        <button aria-label="Filters"><svg viewBox="0 0 20 20"><path fill="#8e8e8e" d="M2 4h16l-6 7v7H8v-7z"/></svg></button>
        <button aria-label="Filter settings"><svg viewBox="0 0 20 20"><path fill="#d8dadf" d="M2 4h14l-5 6v5L8 12v-2z"/><path fill="#eef" stroke="#346" stroke-width=".6" d="M11 9h7v9h-7z"/><path fill="#2863b8" d="M12.500 10.500h4v2.500h-4z"/></svg></button>
        <button aria-label="Sort"><svg viewBox="0 0 20 20"><path fill="url(#gd)" d="M4 3h12v5H4z"/><path fill="#eceef1" d="M4 10l2-1 2 1 2-1 2 1 2-1 2 1v7H4z"/></svg></button>
      </div>
      <div class="elist"><table><thead><tr><th>Name (Sorted Ascending)<svg width="8" height="7" viewBox="0 0 8 7"><path fill="#ccc" d="M4 0l4 7H0z"/></svg></th><th class="fz">Frozen</th></tr></thead></table></div>
    </div>
    <div class="ebot"><button class="wsbox">Workspace: Default</button><button class="wsdd" aria-label="Workspace list"><svg viewBox="0 0 6 3"><path fill="#111" d="M0 0h6L3 3z"/></svg></button><i class="vsep"></i>
      <button aria-label="Layers"><svg viewBox="0 0 20 20"><g fill="#d8d8d8" stroke="#444" stroke-width=".8"><path d="M3 14l6-3 8 1-6 5z"/><path d="M3 10.500l6-3 8 1-6 5z"/><path d="M3 7l6-4 8 1-6 5z"/></g></svg></button>
      <button class="on" aria-label="Hierarchy"><svg viewBox="0 0 20 20"><path fill="none" stroke="#112" d="M10 8v6M10 9l-6 5M10 9l6 5"/><path fill="#eef" stroke="#223" stroke-width=".7" d="M7 2h6v6H7zM2 14h4.500v4H2zM8 14h4.500v4H8zM14 14h4.500v4H14z"/></svg></button>
      <i class="vsep"></i><span class="ss">Selection Set:</span><svg class="more" width="9" height="6" viewBox="0 0 9 6"><path fill="none" stroke="#5a62c0" d="M1 1l2 2-2 2M5 1l2 2-2 2"/></svg></div>
  </div>
</div>

<svg class="callout" width="130" height="60" viewBox="0 0 130 60" aria-hidden="true"><ellipse cx="22.500" cy="20.500" rx="21" ry="17" fill="none" stroke="#f00" stroke-width="2.500"/><path fill="#f00" d="M52 20l29-4-7 7 48 19-1 8-49-19 2 13z"/></svg>
<div class="watermark" aria-hidden="true"><b>Ac</b><span>Go</span></div>
<script src="script.js"></script>
</body>
</html>
```
FILE: styles.css
```css
:root {
  --bg: #444;
  --text: #cfcfcf;
  --blue: #3c7fd9;
  --small: Roboto, "Noto Sans", sans-serif;
  --ui: "Open Sans", "Noto Sans", sans-serif;
}
* { box-sizing: border-box; }
body {
  margin: 0;
  min-height: 100vh;
  background: #60b2d2;
  color: var(--text);
  font: 11px/16px var(--small);
  overflow: hidden;
  position: relative;
}
button, input, select { font: inherit; color: inherit; margin: 0; border-radius: 0; }
button { background: none; border: 0; padding: 0; }
svg { display: block; flex: none; }
h1, h2 { margin: 0; font-weight: 400; }
.defs { position: absolute; width: 0; height: 0; }
:where(input[type="text"]) { background: #555; border: solid #141414; border-width: 2px 1px 1px 2px; padding: 0 2px; min-width: 0; }

.window {
  min-height: 100vh;
  display: flex;
  flex-direction: column;
  border: 1px solid #4388a5;
  border-bottom: 0;
  border-right-width: 2px;
  padding: 0 6px 8px 7px;
}

/* title bar and menus */
.header { display: grid; grid-template-columns: 41px 1fr; grid-template-rows: 31px 21px; font-family: var(--ui); }
.appbtn {
  grid-area: 1 / 1 / 3 / 2;
  z-index: 1;
  align-self: end;
  height: 41px;
  margin-bottom: 4px;
  border: 1px solid #111;
  background: linear-gradient(#dedede, #8f8f8f);
  color: #111;
  display: grid;
  grid-template-columns: 24px 10px;
  justify-content: end;
  align-items: center;
  padding: 2px 2px 0;
}
.appbtn span { grid-column: 1 / 3; font-size: 9px; line-height: 10px; font-weight: 600; text-align: center; }
.titlebar { grid-area: 1 / 2; display: flex; align-items: flex-end; min-width: 0; }
.qat, .info {
  display: flex;
  height: 23px;
  background: linear-gradient(#ababab, #858585);
  border: 1px solid #6b7377;
  border-bottom: 0;
}
.qat { padding-left: 4px; }
.qat button, .info button { width: 24px; display: grid; place-items: center; }
.qat .narrow, .info .narrow { width: 12px; }
.tool-arrow { fill: #eee; stroke: #333; }
.qat .qmore { width: 17px; }
.titlebar h1 { flex: 1; text-align: center; color: #16242c; font-size: 14px; line-height: 31px; padding-left: 12px; }

.sel { position: relative; display: block; }
.sel select { appearance: none; width: 100%; height: 100%; border: 0; border-radius: 0; padding: 0 14px 0 2px; background: transparent; color: #111; }
.sel svg { position: absolute; right: 5px; top: 50%; margin-top: -3px; pointer-events: none; }
.ws { width: 128px; height: 22px; background: linear-gradient(#f8f8f8, #dcdcdc); border: 1px solid #666; margin-left: 1px; }
.ws select { font-size: 12px; padding: 0 10px 0 3px; }
.light { background: #ececec; border: solid #161616; border-width: 2px 1px 1px 2px; height: 21px; }

.info { width: 456px; }
.info .infoarrow { width: 12px; border-right: 1px solid #555; background: #969696; }
.search { width: 180px; border: 1px solid #111; background: #fff; padding: 0 2px; color: #333; }
.search::placeholder { color: #666; font-style: italic; font-size: 12px; }
.info .signin { width: 120px; display: flex; align-items: center; gap: 4px; color: #111; padding-left: 3px; font-size: 12px; }
.info .signin .push { margin-left: auto; }
.info .xchg { width: 28px; }
.isep { width: 1px; margin: 2px 4px; background: #aaa; }
.winctl { display: flex; align-self: flex-start; height: 20px; width: 123px; justify-content: flex-end; }
.winctl button { width: 27px; display: grid; place-items: center; }
.winctl .close { width: 44px; background: #c75050; }

.menubar {
  grid-area: 2 / 1 / 3 / 3;
  display: grid;
  grid-template-columns: 44px 53px 57px 54px 58px 74px 80px 95px 73px 70px 80px 66px 88px 57px 81px auto;
  padding-left: 55px;
  background: linear-gradient(#8e8e8e, #464646);
  border-top: 1px solid #333;
}
.menubar button { text-align: left; color: #f2f2f2; font-size: 12px; white-space: nowrap; }

.client { flex: 1; display: flex; flex-direction: column; background: var(--bg); min-width: 0; }

/* main toolbar */
.toolbar { display: flex; height: 40px; border-top: 1px solid #2a2a2a; border-bottom: 2px solid #1c1c1c; overflow: hidden; background: var(--bg); }
.toolbar > button { width: 32px; height: 32px; margin-top: 2px; display: grid; place-items: center; flex: none; }
.toolbar > button > svg:not(.arrow) { width: 32px; height: 32px; }
.arrow { fill: #f4f4f4; stroke: #222; stroke-width: 1px; }
.toolbar > .on { background: var(--blue); border: 1px solid #111; height: 31px; width: 31px; margin-right: 1px; }
.toolbar .on svg { margin: -1px; }
.sep { flex: none; width: 6px; background: linear-gradient(#0f0f0f, #0f0f0f) center / 1px 16px no-repeat; }
.sep.five { width: 5px; }
.sep.eight { width: 8px; }
.grip { flex: none; width: 8px; margin: 4px 0; background: linear-gradient(90deg, transparent 3px, #111 3px 4px, transparent 4px 6px, #111 6px 7px, transparent 7px); }
.toolbar .sel { flex: none; margin: 3px 0 0; }
.w68 { width: 68px; }
.toolbar .w70 { width: 70px; margin-left: 1px; }
.toolbar .named { width: 120px; height: 21px; background: #fff; border: 2px solid #222; }
.named select { background: #444; width: 101px; border: 1px solid #ddd; color: #111; padding: 0 0 0 2px; display: block; }
.full { width: 100%; }

/* ribbon */
.ribbon { display: grid; grid-template-columns: 11px 1fr; grid-template-rows: 20px 20px; font-family: var(--ui); }
.grip.tall { grid-row: 1 / 3; }
.rtabs { background: #525252; border-bottom: 1px solid #2e2e2e; display: flex; padding: 2px 0 0 3px; }
.rtabs button { width: 92px; color: #9c9c9c; font-size: 12px; line-height: 14px; }
.rtabs .cur { width: 82px; background: linear-gradient(#6f6f6f, #555); border: 1px solid #333; border-bottom: 0; color: #ddd; padding-left: 10px; }
.rpanel { background: linear-gradient(#474747, #3a3a3a); display: flex; padding-left: 1px; }
.rpanel button { padding: 0 4px; background: #505050; border: 1px solid #666; border-top: 0; color: #eee; font-size: 12px; height: 18px; width: 107px; white-space: nowrap; }

/* work area */
.main { flex: 1; display: grid; grid-template-columns: 40px minmax(0, 1fr) 184px; background: var(--bg); }
.strip { background: #2e2e2e; display: flex; flex-direction: column; align-items: center; border-right: 1px solid #262626; }
.striptop { align-self: stretch; height: 11px; background: linear-gradient(#111, #111) center 4px / 34px 1px no-repeat #484848; border-top: 1px solid #222; }
.play { width: 20px; height: 20px; margin-top: auto; margin-bottom: 10px; border-radius: 3px; background: #484848; border: 1px solid #1c1c1c; display: grid; place-items: center; }
.layout { width: 36px; height: 44px; margin: 0 0 3px 4px; border-radius: 4px 0 0 4px; background: linear-gradient(#4d648c, #3c7fd9); display: grid; grid-template: 13px 13px / 15px 15px; gap: 1px; place-content: center; }
.layout i { background: #5d6b80; border: 1px solid #26303f; border-radius: 2px; }

.center { display: flex; flex-direction: column; min-width: 0; }
.viewports { flex: 1; display: grid; grid-template: minmax(0, 1fr) minmax(0, 1fr) / minmax(0, 1fr) minmax(0, 1fr); gap: 5px 2px; padding: 1px 0 2px; }
.vp { position: relative; background: #383838; border: 2px solid #3a3a3a; overflow: hidden; min-height: 0; }
.vp.active { border-color: #83691f; }
.vp span { position: absolute; left: 4px; top: 3px; color: #d4d4d4; white-space: nowrap; }
.vp .grid, .vp .plane { position: absolute; inset: 0; width: 100%; height: 100%; }
.persp { background: linear-gradient(#1e1e1e, #505050); }
.tripod { position: absolute; left: 19px; bottom: 19px; overflow: visible; font-size: 10px; }
.tripod path { shape-rendering: crispEdges; }
.tripod.low { left: 0; bottom: 19px; }
.persp .tripod { left: 0; }
.cube { position: absolute; right: 14px; }
.cube.front { top: 37px; }
.cube.home { top: 28px; right: 16px; }

.slider { display: flex; height: 18px; gap: 2px; padding-left: 1px; }
.slider button { width: 14px; background: #454545; border-right: 1px solid #111; border-bottom: 1px solid #111; font-size: 12px; line-height: 14px; }
.slider .handle { width: 124px; border-bottom-width: 2px; border-right-width: 2px; font: 11px/14px var(--ui); }
.track { display: flex; height: 26px; border-top: 2px solid #161616; }
.track > button { width: 49px; display: grid; place-items: center; padding-right: 6px; }
.ruler { flex: 1; margin-right: 49px; background: #272727; padding: 0 4px; }
.ticks { width: 100%; height: 24px; overflow: visible; font: 11px var(--ui); }

/* command panel */
.cmd { display: flex; flex-direction: column; border-bottom: 2px solid #1a1a1a; padding-left: 2px; }
.ctabs { display: flex; border-bottom: 1px solid #161616; margin-top: 3px; height: 25px; gap: 1px; padding-right: 8px; }
.ctabs button { flex: 1; border: 1px solid #161616; border-bottom: 0; border-radius: 4px 4px 0 0; background: #323232; display: grid; place-items: center; }
.ctabs svg { width: 21px; height: 21px; }
.ctabs .cur { background: var(--bg); margin-bottom: -1px; border-left-color: #444; }
.ctabs .cur svg { width: 17px; height: 17px; }
.cats { display: flex; padding: 8px 0 5px 9px; gap: 1px; }
.cats button { width: 23px; height: 23px; display: grid; place-items: center; color: #ccc; }
.cats svg { width: 19px; height: 19px; }
.cats .on { background: var(--blue); border: 1px solid #111; }
.kind { padding: 0 9px 7px 9px; border-bottom: 1px solid #222; }
.kind .light { height: 21px; }
.rolls { flex: 1; display: flex; flex-direction: column; gap: 8px; padding: 4px 3px 0 7px; margin-right: 7px; border-right: 1px solid #383838; margin-bottom: 4px; border-bottom: 1px solid #383838; }
.roll { position: relative; padding: 0 3px 8px; }
.roll::before { content: ""; position: absolute; inset: 8px 0 0; border: 1px solid #1a1a1a; border-top: 0; pointer-events: none; }
.roll.r1 { padding-bottom: 3px; }
.roll.r3 { padding-bottom: 5px; }
.roll.tight { padding-bottom: 0; margin-bottom: -4px; }
.roll.tight::before { top: 3px; bottom: 3px; }
.roll h2 { position: relative; font-size: 11px; line-height: 14px; height: 16px; border: 1px solid #666; background: #3f3f3f; color: #f0f0f0; text-align: center; }
.roll h2 i { position: absolute; left: 4px; top: -1px; font-style: normal; font-weight: 700; font-size: 12px; }
input[type="checkbox"], input[type="radio"] { appearance: none; width: 13px; height: 13px; background: #555; border: solid #161616; border-width: 2px 1px 1px 2px; flex: none; }
input[type="checkbox"] { border-right-color: #444; border-bottom-color: #444; }
input[type="checkbox"]:checked::before { content: ""; display: block; width: 5px; height: 8px; margin: -1px 0 0 3px; border: solid #eee; border-width: 0 2px 2px 0; transform: rotate(40deg); }
input[type="radio"] { width: 11px; height: 11px; border-radius: 50%; border-width: 2px; border-right-color: #2c2c2c; border-bottom-color: #2c2c2c; }
input[type="radio"]:checked { background: #eee; }
.autogrid { display: flex; gap: 9px; align-items: center; padding: 2px 0 2px 32px; }
.prims { display: grid; grid-template-columns: 69px 69px; gap: 3px 9px; padding: 0 0 0 6px; }
.prims button { height: 18px; line-height: 14px; border: 1px solid #3a3a3a; border-right-color: #111; border-bottom-color: #111; }
.prims .on { background: var(--blue); border-color: #111 #444 #444 #111; }
.namecolor { display: flex; gap: 4px; padding: 6px 2px 0 4px; }
.namecolor input { flex: 1; height: 20px; }
.namecolor button { width: 17px; height: 20px; background: #c43180; border: 1px solid #111; }
.radios { display: flex; gap: 29px; padding: 5px 0 0 23px; }
.radios label { display: flex; gap: 6px; align-items: center; }
.params { display: grid; grid-template-columns: 77px 54px 13px; gap: 5px 2px; padding: 8px 0 0; align-items: center; }
.params.segs { padding-top: 12px; }
.params label { text-align: right; line-height: 14px; }
.params input { height: 16px; line-height: 12px; border-right-color: #444; border-bottom-color: #333; font-size: 12px; }
.spin {
  height: 16px;
  border-right: 1px solid #111;
  border-bottom: 1px solid #111;
  position: relative;
}
.spin::before, .spin::after { content: ""; position: absolute; left: 3px; border: 3px solid transparent; }
.spin::before { top: 3px; border-top: 0; border-bottom: 3px solid #ccc; }
.spin::after { bottom: 2px; border-bottom: 0; border-top: 3px solid #ccc; }
.checks { display: flex; flex-direction: column; gap: 6px; padding: 9px 0 0 7px; margin-bottom: -4px; white-space: nowrap; }
.checks label { display: flex; gap: 4px; align-items: center; }

/* status bar */
.status { display: flex; height: 50px; padding-top: 3px; }
.listener { width: 100px; padding: 0 1px; display: flex; flex-direction: column; gap: 1px; }
.pink { height: 22px; background: #dcc3c5; border: 1px solid #fff; border-top-color: #777; border-left-color: #777; }
.script { height: 23px; background: #fff; color: #111; border: 1px solid #fff; border-left-color: #777; border-top-color: #777; width: 98px; padding: 0 1px 3px 5px; font: 12px "Liberation Mono", monospace; }
.lines { flex: 1; min-width: 0; border-left: 2px solid #1a1a1a; margin-left: 3px; padding-left: 2px; display: flex; flex-direction: column; gap: 3px; }
.line { display: flex; height: 22px; min-width: 0; }
.cell { border: 1px solid #141414; border-right-color: #383838; border-bottom-color: #383838; padding: 0 4px; line-height: 20px; text-align: left; white-space: nowrap; }
.grow { flex: 1; min-width: 0; }
.fix { width: 101px; flex: none; margin-left: 3px; }
.sicons { display: flex; }
.sicons button { width: 27px; display: grid; place-items: center; }
.coord { display: flex; align-items: center; justify-content: flex-end; gap: 1px; width: 71px; margin-right: 11px; }
.coord input { width: 58px; height: 21px; }
.iso { width: 22px; height: 22px; background: var(--blue); border: 1px solid #111; display: grid; place-items: center; margin-left: 3px; }
.keybig { width: 44px; height: 45px; border: 1px solid #383838; border-right-color: #111; border-bottom-color: #111; display: grid; place-items: center; margin-left: 2px; }
.keys { width: 48px; margin-left: 4px; }
.keys button { width: 48px; height: 22px; border-right: 1px solid #111; border-bottom: 1px solid #111; white-space: nowrap; }
.filters { width: 116px; margin-left: 2px; }
.filters .light { height: 21px; }
.frow { display: flex; margin-top: 1px; }
.tangent { width: 25px; display: grid; place-items: center; }
.kf { flex: 1; height: 22px; border: 1px solid #3a3a3a; border-right-color: #111; border-bottom-color: #111; }
.playback { width: 129px; padding-left: 4px; }
.prow { display: flex; height: 22px; }
.prow button { width: 24px; display: grid; place-items: center; }
.prow svg { width: 18px; height: 14px; }
.prow.two { align-items: center; margin-right: -8px; }
.prow.two svg { height: 18px; }
.prow.two input { width: 64px; height: 21px; margin-left: 3px; }
.prow .spin { width: 13px; height: 20px; }
.nav { width: 97px; display: grid; grid-template-columns: repeat(4, 23px); grid-auto-rows: 22px; justify-content: center; }
.nav button { display: grid; place-items: center; }
.nav svg { width: 18px; height: 18px; }

/* floating explorer */
.explorer { position: absolute; left: 306px; top: 88px; width: 334px; height: 794px; background: #ebebeb; border: 1px solid #d6d6d6; padding: 0 7px 7px; display: flex; flex-direction: column; }
.etitle { height: 30px; display: flex; align-items: center; color: #222; padding-left: 1px; }
.etitle h2 { flex: 1; font: 14px/30px var(--ui); padding-left: 7px; white-space: nowrap; }
.etitle button { align-self: flex-start; height: 21px; width: 27px; display: grid; place-items: center; }
.etitle .x { width: 44px; background: #bcbcbc; }
.ebody { flex: 1; background: var(--bg); display: flex; flex-direction: column; min-height: 0; }
.emenu { display: flex; gap: 18px; padding: 4px 0 4px 15px; font-size: 12px; }
.efind { display: flex; align-items: center; padding-left: 3px; gap: 1px; }
.efind input { width: 151px; height: 24px; border: 1px solid #666; }
.efind button, .ebot > button { width: 22px; height: 22px; }
.efind svg, .ebot > button svg, .ecol svg { width: 19px; height: 19px; margin: auto; }
.ebody .on { background: var(--blue); border: 1px solid #dde4ee; outline: 1px solid #1a1a1a; }
.vsep { width: 1px; height: 20px; background: #888; margin: 0 2px; flex: none; }
.emid { flex: 1; display: flex; }
.ecol { width: 24px; display: flex; flex-direction: column; gap: 3px; padding: 5px 0 0 1px; }
.ecol button { width: 20px; height: 20px; color: #222; display: grid; place-items: center; }
.ecol .on svg { width: 18px; height: 18px; }
.ecol .dark { color: #1c2c50; }
.hsep { height: 1px; width: 18px; margin: 1px 1px 0; background: #888; }
.elist { flex: 1; border: 1px solid #111; background: #555; margin-top: 1px; }
.elist table { width: 100%; border-spacing: 1px; background: #222; }
.elist th { font-weight: 400; text-align: left; height: 19px; border: 1px solid #888; background: #444; padding: 0 1px; position: relative; vertical-align: middle; line-height: 15px; }
.elist th svg { position: absolute; right: 1px; top: 5px; }
.elist .fz { width: 63px; }
.ebot { display: flex; align-items: center; height: 28px; padding-left: 4px; gap: 1px; position: relative; font-family: var(--ui); }
.ebot > .wsbox { width: 146px; height: 23px; border: 1px solid #5c5c5c; background: #484848; color: #ff0; text-align: left; padding-left: 2px; }
.ebot > .wsdd { width: 12px; }
.ebot > .wsdd svg { width: 6px; height: 3px; }
.ss { color: #ddd; padding-left: 3px; }
.more { position: absolute; right: 2px; top: 4px; }

.callout { position: absolute; left: 589px; top: 80px; }
.watermark { position: absolute; right: 0; top: 864px; width: 24px; overflow: hidden; color: #8a8f92; line-height: 22px; font-family: var(--ui); }
.watermark b { display: block; font-weight: 400; font-size: 19px; }
.watermark span { font-size: 13px; }
```
FILE: script.js
```js
const NS = "http://www.w3.org/2000/svg";

function line(svg, x1, y1, x2, y2, color) {
  const el = document.createElementNS(NS, "line");
  Object.entries({ x1, y1, x2, y2, stroke: color }).forEach(([k, v]) => el.setAttribute(k, v));
  svg.append(el);
}

// Orthographic grids: even cells around the view centre, axes in black.
const CELL = 13.67;
document.querySelectorAll(".grid").forEach((svg) => {
  const w = svg.clientWidth, h = svg.clientHeight;
  const shade = (i) => (i === 0 ? "#000" : i % 10 === 0 ? "#4b4b4b" : "#646464");
  const order = [];
  for (let i = -40; i <= 40; i++) if (i) order.push(i);
  order.push(0);
  order.forEach((i) => {
    const x = Math.round(w / 2 + i * CELL) + 0.5;
    const y = Math.round(h / 2 + i * CELL) + 0.5;
    if (x > 0 && x < w) line(svg, x, 0, x, h, shade(i));
    if (y > 0 && y < h) line(svg, 0, y, w, y, shade(i));
  });
});

// Perspective ground plane, 14 x 14 cells seen across a corner.
document.querySelectorAll(".plane").forEach((svg) => {
  const cx = svg.clientWidth / 2, horizon = -198, N = 7, S = 0.3514;
  const point = (i, j) => {
    const p = (S * (i - j)) / (2 * N), q = (S * (i + j)) / (2 * N);
    return [cx + (742.7 * p) / (1 + q), horizon + 373 / (1 + q)];
  };
  const draw = (i, color) => {
    line(svg, ...point(i, -N), ...point(i, N), color);
    line(svg, ...point(-N, i), ...point(N, i), color);
  };
  for (let i = -N; i <= N; i++) if (i) draw(i, "#6b6b6b");
  draw(0, "#000");
});

// Time ruler, frames 0 to 100.
const ticks = document.querySelector(".ticks");
for (let i = 0; i <= 100; i++) {
  if (i === 0) {
    const r = document.createElementNS(NS, "rect");
    Object.entries({ x: -3, y: 1, width: 7, height: 23, fill: "#857a26" }).forEach(([k, v]) => r.setAttribute(k, v));
    ticks.append(r);
  }
  line(ticks, i + "%", 0, i + "%", i % 5 ? 11 : 24, "#777");
  if (i % 5 === 0) {
    const t = document.createElementNS(NS, "text");
    t.setAttribute("x", i + "%");
    t.setAttribute("y", 21);
    t.setAttribute("text-anchor", "middle");
    t.setAttribute("fill", i ? "#cfcfcf" : "#f0e030");
    t.textContent = i;
    ticks.append(t);
  }
}
```
